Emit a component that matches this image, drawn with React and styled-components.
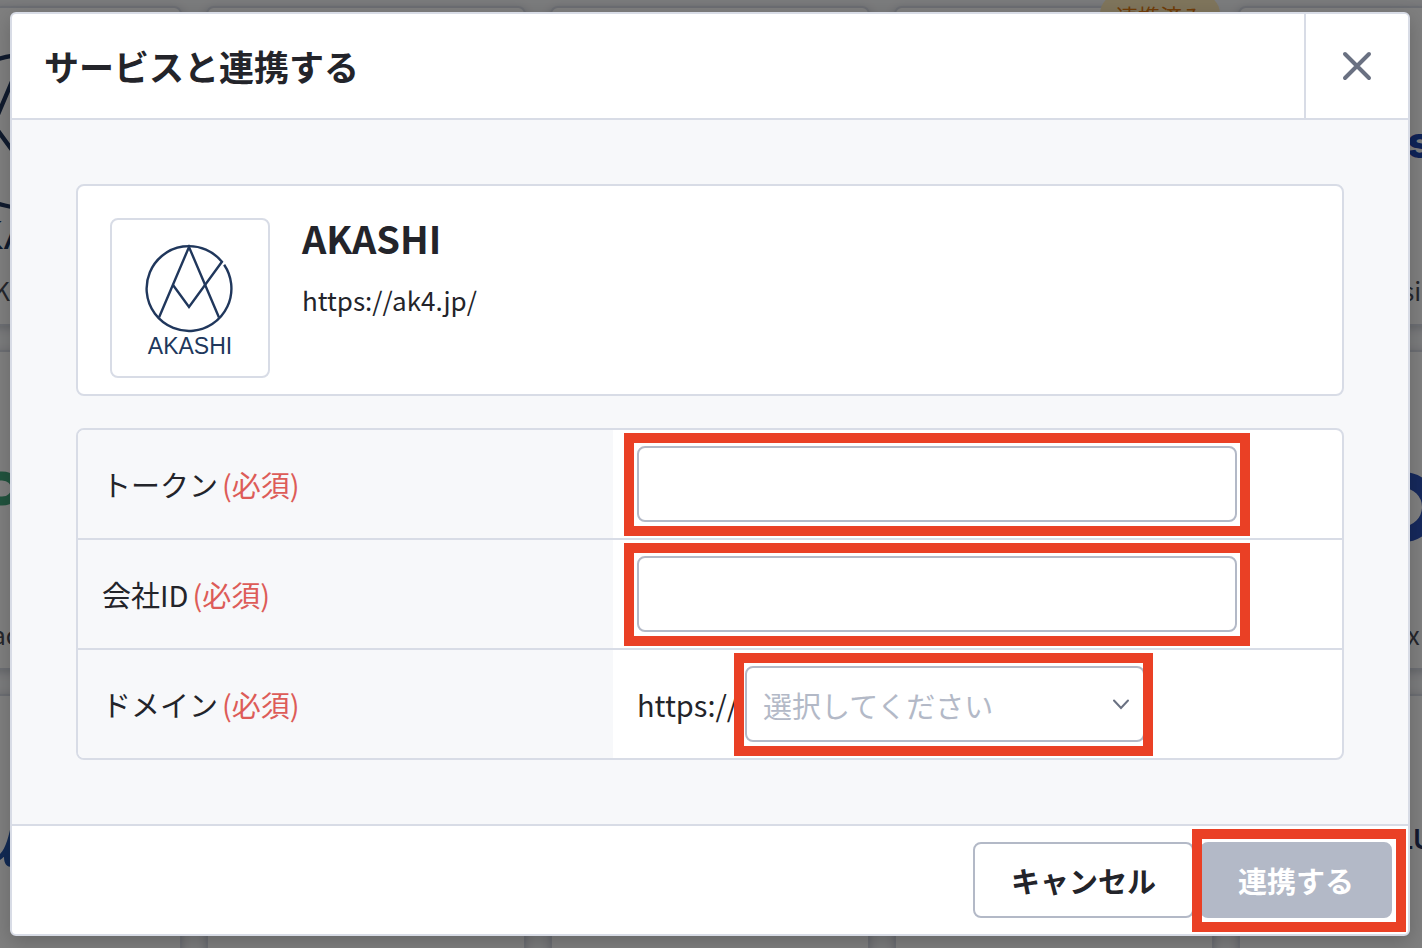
import React from "react";
import styled, { createGlobalStyle } from "styled-components";

const color = {
  text: "#23242a",
  line: "#d8dce6",
  control: "#b3b9c7",
  surface: "#f7f8fa",
  required: "#dd5c58",
  marker: "#ea4025",
  icon: "#6a7182",
  navy: "#20375c",
};

const GlobalStyle = createGlobalStyle`
  *, *::before, *::after { box-sizing: border-box; }
  body {
    margin: 0;
    color: ${color.text};
    font-family: "Noto Sans CJK JP", "Noto Sans", sans-serif;
    font-size: 29px;
    line-height: 40px;
  }
  button, input, select { font: inherit; color: inherit; margin: 0; }
`;

const Page = styled.div`
  position: relative;
  min-height: 100vh;
`;

const Catalog = styled.div`
  position: absolute;
  inset: 0;
  overflow: hidden;
  display: grid;
  grid-template-columns: repeat(5, 320px);
  grid-auto-rows: 320px;
  gap: 24px;
  justify-content: center;
  padding: 6px 2px 0 0;
  background: ${color.surface};
`;

const ServiceCard = styled.article`
  position: relative;
  display: flex;
  flex-direction: column;
  align-items: center;
  background: #fff;
  border: 2px solid ${color.line};
  border-radius: 8px;
  box-shadow: 0 2px 8px rgba(60, 70, 100, 0.25);
`;

const ServiceArt = styled.svg`
  width: 316px;
  height: 262px;
  flex: none;
`;

const ServiceName = styled.p`
  margin: 0;
  color: #4a4d58;
  font-size: 25px;
`;

const LinkedBadge = styled.span`
  position: absolute;
  top: -14px;
  right: -8px;
  width: 120px;
  height: 40px;
  border-radius: 20px;
  background: #ffeab8;
  color: #e07a10;
  font-size: 22px;
  line-height: 42px;
  text-align: center;
`;

const Overlay = styled.div`
  position: relative;
  min-height: 100vh;
  padding: 12px 12px 12px 10px;
  background: rgba(0, 0, 0, 0.5);
`;

const Dialog = styled.section`
  border: 2px solid ${color.line};
  border-radius: 6px;
  background: #fff;
  overflow: hidden;
  box-shadow: 0 6px 20px rgba(0, 0, 0, 0.2);
`;

const Header = styled.header`
  display: flex;
  height: 106px;
  border-bottom: 2px solid ${color.line};
`;

const Heading = styled.h1`
  flex: 1;
  margin: 0;
  padding: 0 32px;
  font-size: 35px;
  line-height: 104px;
`;

const CloseButton = styled.button`
  display: flex;
  align-items: center;
  justify-content: center;
  width: 104px;
  padding: 0;
  border: 0;
  border-left: 2px solid ${color.line};
  background: #fff;
`;

const Body = styled.div`
  display: flex;
  flex-direction: column;
  gap: 32px;
  padding: 64px;
  background: ${color.surface};
`;

const Summary = styled.div`
  display: flex;
  gap: 32px;
  padding: 32px 32px 16px;
  border: 2px solid ${color.line};
  border-radius: 8px;
  background: #fff;
`;

const LogoBox = styled.div`
  flex: none;
  width: 160px;
  height: 160px;
  border: 2px solid ${color.line};
  border-radius: 8px;
`;

const SummaryTitle = styled.h2`
  margin: 0 0 22px;
  font-size: 38px;
  line-height: 40px;
`;

const SummaryUrl = styled.p`
  margin: 0;
  font-size: 26px;
`;

const Fields = styled.div`
  border: 2px solid ${color.line};
  border-radius: 8px;
  background: #fff;
  overflow: hidden;
`;

const FieldRow = styled.div`
  display: grid;
  grid-template-columns: 535fr 729fr;
  & + & { border-top: 2px solid ${color.line}; }
`;

const FieldLabel = styled.label`
  display: flex;
  align-items: center;
  gap: 4px;
  padding: 0 24px;
  background: ${color.surface};
`;

const Required = styled.span`
  color: ${color.required};
`;

const FieldValue = styled.div`
  display: flex;
  align-items: center;
  padding: 16px 24px;
`;

const Prefix = styled.span`
  flex: none;
  width: 108px;
`;

const Marked = styled.div`
  position: relative;
  display: flex;
  width: ${(p) => p.$width || "auto"};
  &::after {
    content: "";
    position: absolute;
    inset: ${(p) => p.$reach};
    border: 10px solid ${color.marker};
    pointer-events: none;
  }
`;

const TextInput = styled.input`
  width: 100%;
  height: 76px;
  padding: 0 16px;
  border: 2px solid ${color.control};
  border-radius: 8px;
  background: #fff;
`;

const Select = styled.select`
  appearance: none;
  width: 100%;
  height: 76px;
  padding: 2px 48px 0 16px;
  border: 2px solid ${color.control};
  border-radius: 8px;
  background: #fff;
  color: ${color.control};
`;

const Chevron = styled.svg`
  position: absolute;
  top: 33px;
  right: 15px;
  pointer-events: none;
`;

const Footer = styled.footer`
  display: flex;
  justify-content: flex-end;
  gap: 6px;
  padding: 16px;
  border-top: 2px solid ${color.line};
`;

const Button = styled.button`
  height: 76px;
  padding: 0 36px;
  border: 2px solid ${color.control};
  border-radius: 8px;
  font-weight: 700;
  background: ${(p) => (p.$filled ? color.control : "#fff")};
  color: ${(p) => (p.$filled ? "#fff" : color.text)};
`;

function AkashiMark() {
  return (
    <g>
      <g fill="none" stroke={color.navy} strokeWidth="2.4">
        <path d="M112.15 44.79A42.4 42.4 0 1 1 109.95 41.82L77 87L61 65" />
        <path d="M47 97.5L77 27L107 97.5" />
      </g>
      <text x="78" y="134" textAnchor="middle" fontFamily="Liberation Sans, Arial, sans-serif" fontSize="23" fill={color.navy}>
        AKASHI
      </text>
    </g>
  );
}

const services = [
  {
    name: "AKASHI",
    art: (
      <g transform="translate(20 0) scale(1.8)">
        <AkashiMark />
      </g>
    ),
  },
  {},
  {},
  { linked: true },
  {
    name: "Atlassian",
    art: (
      <text x="167" y="150" fontFamily="Inter, sans-serif" fontWeight="800" fontSize="44" fill="#1d46b0">s</text>
    ),
  },
  {
    name: "Backlog",
    art: <path d="M110 124H138C156 124 156 149 138 149H110" fill="none" stroke="#42a67c" strokeWidth="9" />,
  },
  {},
  {},
  {},
  {
    name: "Box",
    art: <circle cx="163" cy="155" r="27" fill="none" stroke="#2c52b8" strokeWidth="16" />,
  },
  {
    art: <path d="M148 124C145 140 142 152 136 158V164C138 163 139 161 140 161C140 168 143 171 148 171Z" fill="#2455a8" />,
  },
  {},
  {},
  {},
  {
    art: (
      <text x="158" y="153" fontFamily="Inter, sans-serif" fontWeight="600" fontSize="27" fill="#26335c">LU</text>
    ),
  },
];

const fields = [
  { id: "token", label: "トークン" },
  { id: "company", label: "会社ID" },
];

export default function App() {
  return (
    <Page>
      <GlobalStyle />
      <Catalog aria-hidden="true">
        {services.map((s, i) => (
          <ServiceCard key={i}>
            <ServiceArt viewBox="0 0 316 262">{s.art}</ServiceArt>
            {s.name && <ServiceName>{s.name}</ServiceName>}
            {s.linked && <LinkedBadge>連携済み</LinkedBadge>}
          </ServiceCard>
        ))}
      </Catalog>
      <Overlay>
        <Dialog role="dialog" aria-modal="true" aria-labelledby="dialog-title">
          <Header>
            <Heading id="dialog-title">サービスと連携する</Heading>
            <CloseButton type="button" aria-label="閉じる">
              <svg width="32" height="32" viewBox="0 0 32 32" fill="none" stroke={color.icon} strokeWidth="4" strokeLinecap="round">
                <path d="M4 4L28 28M28 4L4 28" />
              </svg>
            </CloseButton>
          </Header>
          <Body>
            <Summary>
              <LogoBox>
                <svg width="156" height="156" viewBox="0 0 156 156" role="img" aria-label="AKASHI">
                  <AkashiMark />
                </svg>
              </LogoBox>
              <div>
                <SummaryTitle>AKASHI</SummaryTitle>
                <SummaryUrl>https://ak4.jp/</SummaryUrl>
              </div>
            </Summary>
            <Fields>
              {fields.map((f) => (
                <FieldRow key={f.id}>
                  <FieldLabel htmlFor={f.id}>
                    {f.label}
                    <Required>(必須)</Required>
                  </FieldLabel>
                  <FieldValue>
                    <Marked $width="600px" $reach="-13px -13px -14px">
                      <TextInput id={f.id} type="text" required />
                    </Marked>
                  </FieldValue>
                </FieldRow>
              ))}
              <FieldRow>
                <FieldLabel htmlFor="domain">
                  ドメイン
                  <Required>(必須)</Required>
                </FieldLabel>
                <FieldValue>
                  <Prefix>https://</Prefix>
                  <Marked $width="400px" $reach="-13px -8px -14px -11px">
                    <Select id="domain" required defaultValue="">
                      <option value="">選択してください</option>
                    </Select>
                    <Chevron width="18" height="11" viewBox="0 0 18 11" fill="none" stroke={color.icon} strokeWidth="2" strokeLinecap="round">
                      <path d="M2 1.5L9 9L16 1.5" />
                    </Chevron>
                  </Marked>
                </FieldValue>
              </FieldRow>
            </Fields>
          </Body>
          <Footer>
            <Button type="button">キャンセル</Button>
            <Marked $reach="-13px -14px -14px -8px">
              <Button type="submit" $filled>連携する</Button>
            </Marked>
          </Footer>
        </Dialog>
      </Overlay>
    </Page>
  );
}
